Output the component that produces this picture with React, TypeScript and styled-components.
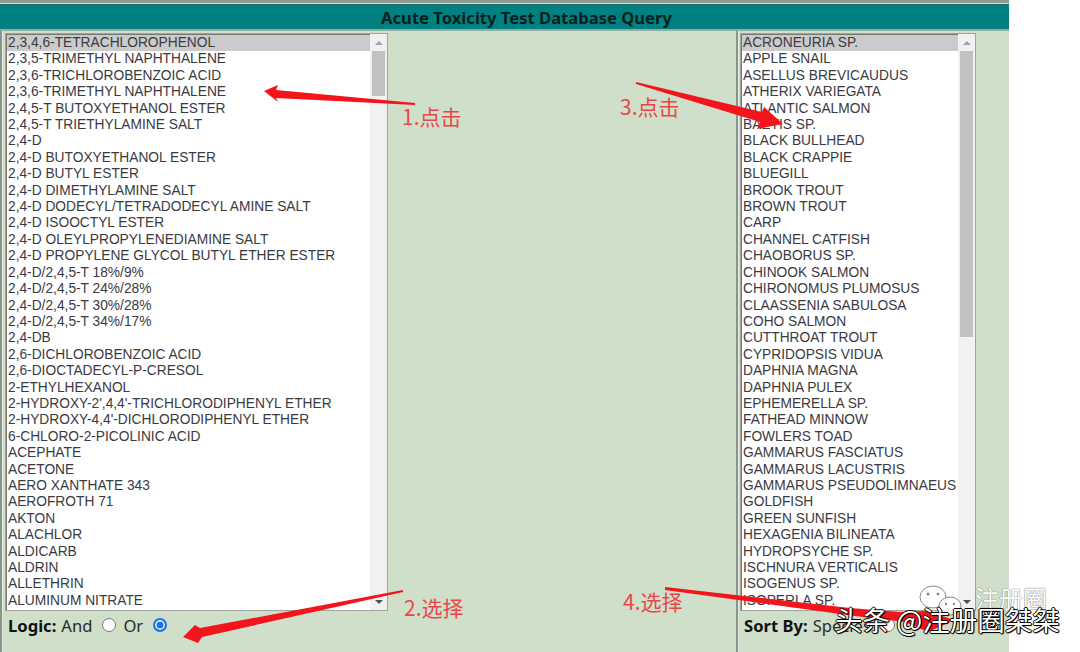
import React from "react";
import styled, { createGlobalStyle } from "styled-components";

const chemicals = [
  "2,3,4,6-TETRACHLOROPHENOL",
  "2,3,5-TRIMETHYL NAPHTHALENE",
  "2,3,6-TRICHLOROBENZOIC ACID",
  "2,3,6-TRIMETHYL NAPHTHALENE",
  "2,4,5-T BUTOXYETHANOL ESTER",
  "2,4,5-T TRIETHYLAMINE SALT",
  "2,4-D",
  "2,4-D BUTOXYETHANOL ESTER",
  "2,4-D BUTYL ESTER",
  "2,4-D DIMETHYLAMINE SALT",
  "2,4-D DODECYL/TETRADODECYL AMINE SALT",
  "2,4-D ISOOCTYL ESTER",
  "2,4-D OLEYLPROPYLENEDIAMINE SALT",
  "2,4-D PROPYLENE GLYCOL BUTYL ETHER ESTER",
  "2,4-D/2,4,5-T 18%/9%",
  "2,4-D/2,4,5-T 24%/28%",
  "2,4-D/2,4,5-T 30%/28%",
  "2,4-D/2,4,5-T 34%/17%",
  "2,4-DB",
  "2,6-DICHLOROBENZOIC ACID",
  "2,6-DIOCTADECYL-P-CRESOL",
  "2-ETHYLHEXANOL",
  "2-HYDROXY-2',4,4'-TRICHLORODIPHENYL ETHER",
  "2-HYDROXY-4,4'-DICHLORODIPHENYL ETHER",
  "6-CHLORO-2-PICOLINIC ACID",
  "ACEPHATE",
  "ACETONE",
  "AERO XANTHATE 343",
  "AEROFROTH 71",
  "AKTON",
  "ALACHLOR",
  "ALDICARB",
  "ALDRIN",
  "ALLETHRIN",
  "ALUMINUM NITRATE",
];

const species = [
  "ACRONEURIA SP.",
  "APPLE SNAIL",
  "ASELLUS BREVICAUDUS",
  "ATHERIX VARIEGATA",
  "ATLANTIC SALMON",
  "BAETIS SP.",
  "BLACK BULLHEAD",
  "BLACK CRAPPIE",
  "BLUEGILL",
  "BROOK TROUT",
  "BROWN TROUT",
  "CARP",
  "CHANNEL CATFISH",
  "CHAOBORUS SP.",
  "CHINOOK SALMON",
  "CHIRONOMUS PLUMOSUS",
  "CLAASSENIA SABULOSA",
  "COHO SALMON",
  "CUTTHROAT TROUT",
  "CYPRIDOPSIS VIDUA",
  "DAPHNIA MAGNA",
  "DAPHNIA PULEX",
  "EPHEMERELLA SP.",
  "FATHEAD MINNOW",
  "FOWLERS TOAD",
  "GAMMARUS FASCIATUS",
  "GAMMARUS LACUSTRIS",
  "GAMMARUS PSEUDOLIMNAEUS",
  "GOLDFISH",
  "GREEN SUNFISH",
  "HEXAGENIA BILINEATA",
  "HYDROPSYCHE SP.",
  "ISCHNURA VERTICALIS",
  "ISOGENUS SP.",
  "ISOPERLA SP.",
];

const GlobalStyle = createGlobalStyle`
  html, body {
    margin: 0;
    background: #fff;
  }
`;

const Page = styled.div`
  position: relative;
  width: 1080px;
  height: 652px;
  overflow: hidden;
  background: #fff;
`;

const Frame = styled.div`
  width: 1009px;
  height: 652px;
  display: flex;
  flex-direction: column;
  background: #d0dfc9;
`;

const TopEdge = styled.div`
  height: 3px;
  background: #8f9a90;
  border-bottom: 1px solid #d5e0d0;
`;

const Title = styled.div`
  height: 24px;
  padding-left: 44px;
  background: #008080;
  border-top: 1px solid #1c6a68;
  border-bottom: 2px solid #8fb0a0;
  display: flex;
  align-items: center;
  justify-content: center;
  font: bold 16.6px "Noto Sans", sans-serif;
  color: #04201f;
`;

const Columns = styled.div`
  flex: 1;
  display: grid;
  grid-template-columns: 736px 1fr;
`;

const Column = styled.div<{ $inset: number }>`
  display: flex;
  flex-direction: column;
  padding: 2px 0 0 ${(p) => p.$inset}px;
  border-left: 2px solid #8a948a;
  box-shadow: inset 1px 0 0 #e4ece0;
`;

const ListBox = styled.div<{ $width: number }>`
  width: ${(p) => p.$width}px;
  height: 578px;
  box-sizing: border-box;
  display: flex;
  background: #fff;
  border: 1px solid #a0a49f;
  box-shadow: inset 1px 1px 0 #777;
`;

const Options = styled.ul`
  flex: 1;
  min-width: 0;
  margin: 0;
  padding: 1px 0 0 1px;
  list-style: none;
  overflow: hidden;
`;

const Option = styled.li<{ $selected?: boolean }>`
  height: 16.41px;
  padding-left: 1px;
  white-space: nowrap;
  font: 13.75px/16.41px "Liberation Sans", Arial, sans-serif;
  color: #3a3a3f;
  background: ${(p) => (p.$selected ? "#cbcbcb" : "transparent")};
`;

const Scrollbar = styled.div`
  width: 17px;
  display: flex;
  flex-direction: column;
  background: #f1f1f1;
`;

const ScrollButton = styled.div<{ $down?: boolean }>`
  height: 17px;
  display: flex;
  align-items: center;
  justify-content: center;

  &::after {
    content: "";
    border-left: 4px solid transparent;
    border-right: 4px solid transparent;
    ${(p) =>
      p.$down
        ? "border-top: 4px solid #505050;"
        : "border-bottom: 4px solid #a3a3a3;"}
  }
`;

const ScrollTrack = styled.div`
  flex: 1;
  padding: 0 2px;
`;

const ScrollThumb = styled.div<{ $height: number }>`
  height: ${(p) => p.$height}px;
  background: #c1c1c1;
`;

const Controls = styled.div<{ $indent: number }>`
  display: flex;
  align-items: center;
  height: 28px;
  padding-left: ${(p) => p.$indent}px;
  font: 16.6px "Noto Sans", sans-serif;
  color: #2a2a2a;
`;

const ControlLabel = styled.b`
  margin-right: 5px;
  color: #111;
`;

const Radio = styled.span<{ $checked?: boolean }>`
  width: 14px;
  height: 14px;
  box-sizing: border-box;
  margin: 0 7px 0 10px;
  border-radius: 50%;
  background: ${(p) => (p.$checked ? "#1a76e6" : "#fff")};
  border: ${(p) => (p.$checked ? "2px solid #1a76e6" : "1px solid #767676")};
  box-shadow: ${(p) => (p.$checked ? "inset 0 0 0 1.5px #fff" : "none")};
`;

const Note = styled.span<{ $x: number; $y: number }>`
  position: absolute;
  left: ${(p) => p.$x}px;
  top: ${(p) => p.$y}px;
  font: 21px "Noto Sans CJK SC", "Noto Sans", sans-serif;
  line-height: 26px;
  color: #e8474a;
  white-space: nowrap;
`;

const Overlay = styled.svg`
  position: absolute;
  left: 0;
  top: 0;
  width: 1080px;
  height: 652px;
  pointer-events: none;
`;

const WatermarkFaint = styled.span`
  position: absolute;
  left: 975px;
  top: 584px;
  font: 24px "Noto Sans CJK SC", sans-serif;
  line-height: 28px;
  color: #fff;
  text-shadow: 0 0 1px #777, 0 0 1px #777;
  white-space: nowrap;
`;

const Watermark = styled.span`
  position: absolute;
  left: 835px;
  top: 603px;
  font: 27.5px "Noto Sans CJK SC", sans-serif;
  line-height: 32px;
  color: #fff;
  white-space: nowrap;
  text-shadow: -1px 0 0 #000, 1px 0 0 #000, 0 -1px 0 #000, 0 1px 0 #000, 1px 1px 1px #000;
`;

const App: React.FC = () => {
  return (
    <Page>
      <GlobalStyle />
      <Frame>
        <TopEdge />
        <Title>Acute Toxicity Test Database Query</Title>
        <Columns>
          <Column $inset={3}>
            <ListBox $width={383}>
              <Options>
                {chemicals.map((name, i) => (
                  <Option key={name} $selected={i === 0}>
                    {name}
                  </Option>
                ))}
              </Options>
              <Scrollbar>
                <ScrollButton />
                <ScrollTrack>
                  <ScrollThumb $height={45} />
                </ScrollTrack>
                <ScrollButton $down />
              </Scrollbar>
            </ListBox>
            <Controls $indent={3}>
              <ControlLabel>Logic:</ControlLabel>
              And
              <Radio />
              Or
              <Radio $checked />
            </Controls>
          </Column>
          <Column $inset={2}>
            <ListBox $width={236}>
              <Options>
                {species.map((name, i) => (
                  <Option key={name} $selected={i === 0}>
                    {name}
                  </Option>
                ))}
              </Options>
              <Scrollbar>
                <ScrollButton />
                <ScrollTrack>
                  <ScrollThumb $height={286} />
                </ScrollTrack>
                <ScrollButton $down />
              </Scrollbar>
            </ListBox>
            <Controls $indent={4}>
              <ControlLabel>Sort By:</ControlLabel>
              Species
              <Radio />
            </Controls>
          </Column>
        </Columns>
      </Frame>

      <Overlay viewBox="0 0 1080 652">
        <polygon fill="#f3141c" points="264,91 278,85 276,90 415,103 415,105 276,98 278,102" />
        <polygon fill="#f3141c" points="636,82 762,112 764,107 783,124 757,129 760,122 636,84" />
        <polygon fill="#f3141c" points="403,590 200,628 195,625 183,637 198,643 202,637 403,592" />
        <polygon fill="#f3141c" points="665,587 850,608 900,612 925,611 955,620 928,632 905,622 855,616 665,590" />
        <g fill="#fff" fillOpacity="0.75" stroke="#8a8a8a" strokeWidth="1">
          <ellipse cx="933" cy="597" rx="13" ry="11" />
          <ellipse cx="950" cy="606" rx="11" ry="9" />
        </g>
        <g fill="#8a8a8a">
          <circle cx="928" cy="594" r="1.5" />
          <circle cx="938" cy="594" r="1.5" />
          <circle cx="946" cy="604" r="1.2" />
          <circle cx="954" cy="604" r="1.2" />
        </g>
      </Overlay>

      <Note $x={402} $y={103}>1.点击</Note>
      <Note $x={620} $y={93}>3.点击</Note>
      <Note $x={404} $y={594}>2.选择</Note>
      <Note $x={623} $y={588}>4.选择</Note>
      <WatermarkFaint>注册圈</WatermarkFaint>
      <Watermark>头条 @注册圈桀桀</Watermark>
    </Page>
  );
};

export default App;
